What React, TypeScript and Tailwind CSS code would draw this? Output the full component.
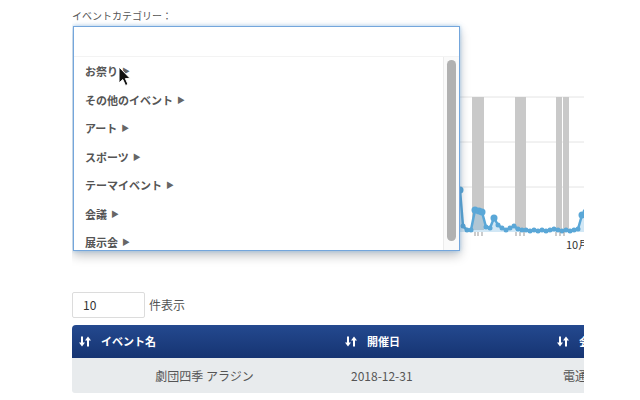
import React from 'react'

const categories = ['お祭り', 'その他のイベント', 'アート', 'スポーツ', 'テーマイベント', '会議', '展示会']

const linePoints: [number, number][] = [
  [460, 190], [463, 226], [467, 230], [471, 230], [475, 210], [479, 211], [482, 212],
  [486, 227], [490, 228], [494, 218], [498, 225], [502, 228], [506, 230], [510, 228],
  [514, 226], [518, 229], [522, 230], [526, 230], [530, 231], [534, 230], [538, 231],
  [542, 230], [546, 231], [550, 230], [554, 229], [558, 230], [562, 231], [566, 230],
  [570, 231], [574, 230], [578, 229], [582, 215], [586, 212],
]

function SortIcon() {
  return (
    <svg width="12" height="11" viewBox="0 0 12 11" className="shrink-0">
      <path d="M3 0.5v8" stroke="white" strokeWidth="2" />
      <path d="M0 6.5l3 4 3-4z" fill="white" />
      <path d="M9 10.5v-8" stroke="white" strokeWidth="2" />
      <path d="M6 4.5l3-4 3 4z" fill="white" />
    </svg>
  )
}

function Chart() {
  const d = linePoints.map((p, i) => (i ? 'L' : 'M') + p[0] + ' ' + p[1]).join(' ')
  return (
    <svg width="512" height="230" viewBox="72 26 512 230" className="block">
      {[97, 142, 187].map(y => (
        <line key={y} x1="80" x2="584" y1={y} y2={y} stroke="#e4e4e4" strokeWidth="1" />
      ))}
      <rect x="472" y="97" width="12" height="133" fill="#c9c9c9" />
      <rect x="515" y="97" width="11" height="133" fill="#c9c9c9" />
      <rect x="556" y="97" width="6" height="133" fill="#c9c9c9" />
      <rect x="563" y="97" width="6" height="133" fill="#c9c9c9" />
      <path d={d + ' L586 232 L460 232 Z'} fill="#8cc3e6" opacity="0.4" />
      <path d={d} stroke="#5aa7d7" strokeWidth="2.5" fill="none" strokeLinejoin="round" />
      {linePoints.map(([x, y]) => (
        <circle key={x} cx={x} cy={y} r={y < 222 ? 3.5 : 2.5} fill="#5aa7d7" />
      ))}
      {[475, 478, 482, 516, 520, 524, 556, 560, 564].map(x => (
        <line key={x} x1={x} x2={x} y1="232" y2="236" stroke="#999" strokeWidth="1" />
      ))}
      <text x="566" y="249" fontSize="11" fill="#333" fontFamily="'Noto Sans CJK JP', sans-serif">
        10月
      </text>
    </svg>
  )
}

function CategoryDropdown() {
  return (
    <div className="absolute left-[1px] top-0 w-[387px] h-[225px] bg-white border border-[#74a6dc] flex flex-col shadow-[0_0_4px_rgba(102,170,230,0.6),0_5px_10px_rgba(0,0,0,0.22)]">
      <div className="h-[30px] border-b border-[#f3f3f3]" />
      <div className="flex flex-1 min-h-0">
        <ul className="flex-1 overflow-hidden">
          {categories.map(c => (
            <li key={c} className="h-[28.5px] flex items-center pl-[11px] text-[11px] font-bold text-[#555]">
              {c}
              <span className="ml-[4px] text-[8px] text-[#666]">▶</span>
            </li>
          ))}
        </ul>
        <div className="w-[16px] border-l border-[#ececec] bg-[#fafafa] pt-[3px] pb-[9px] flex justify-center">
          <div className="w-[9px] h-full rounded-full bg-[#b1b1b1]" />
        </div>
      </div>
    </div>
  )
}

export default function App() {
  return (
    <div className="relative w-[640px] h-[400px] overflow-hidden bg-white font-['Noto_Sans_CJK_JP',sans-serif]">
      <div className="ml-[72px] w-[512px] overflow-hidden pt-[9px]">
        <div className="h-[14px] leading-[14px] text-[10px] text-[#555]">イベントカテゴリー：</div>
        <div className="relative mt-[3px] h-[230px]">
          <Chart />
          <CategoryDropdown />
        </div>

        <div className="mt-[36px] flex items-center gap-[4px]">
          <div className="w-[73px] h-[26px] border border-[#dcdcdc] rounded-[2px] flex items-center pl-[10px] text-[12px] text-[#333]">
            10
          </div>
          <span className="text-[12px] text-[#555]">件表示</span>
        </div>

        <div className="mt-[7px] w-[600px] rounded-tl-[4px] rounded-bl-[3px] overflow-hidden">
          <div className="grid grid-cols-[265px_212px_1fr] h-[33px] bg-gradient-to-b from-[#24498f] to-[#163472] text-white text-[11px] font-bold">
            <div className="flex items-center gap-[10px] pl-[7px]"><SortIcon />イベント名</div>
            <div className="flex items-center gap-[10px] pl-[8px]"><SortIcon />開催日</div>
            <div className="flex items-center gap-[10px] pl-[8px]"><SortIcon />会場</div>
          </div>
          <div className="grid grid-cols-[265px_212px_1fr] h-[35px] bg-[#e8ebed] text-[12px] text-[#555] items-center">
            <div className="text-center">劇団四季 アラジン</div>
            <div className="pl-[14px]">2018-12-31</div>
            <div className="pl-[14px] whitespace-nowrap">電通四季劇場［海］</div>
          </div>
        </div>
      </div>

      <svg className="absolute left-[118px] top-[66px]" width="14" height="21" viewBox="0 0 14 21">
        <path d="M1 1 L1 17 L4.8 13.5 L7.5 19.5 L10 18.4 L7.4 12.6 L12.2 12.6 Z" fill="#111" stroke="#fff" strokeWidth="1" />
      </svg>
    </div>
  )
}
